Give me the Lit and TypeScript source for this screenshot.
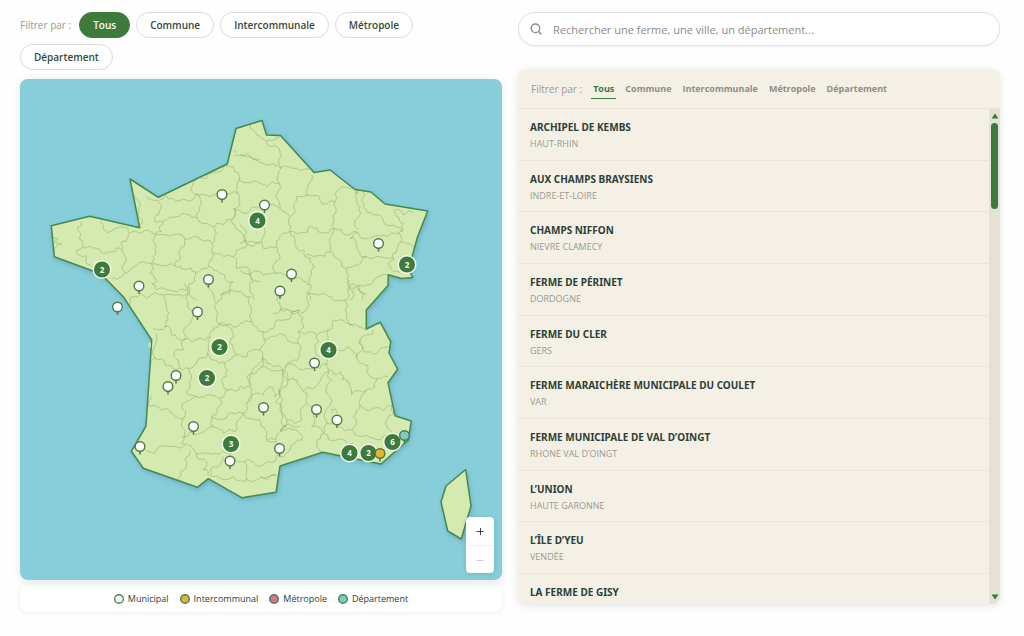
import { LitElement, html, svg, css, nothing } from "lit";
import { customElement, state } from "lit/decorators.js";

const KINDS = ["Tous", "Commune", "Intercommunale", "Métropole", "Département"];

const FARMS: [string, string][] = [
  ["ARCHIPEL DE KEMBS", "HAUT-RHIN"],
  ["AUX CHAMPS BRAYSIENS", "INDRE-ET-LOIRE"],
  ["CHAMPS NIFFON", "NIEVRE CLAMECY"],
  ["FERME DE PÉRINET", "DORDOGNE"],
  ["FERME DU CLER", "GERS"],
  ["FERME MARAICHÈRE MUNICIPALE DU COULET", "VAR"],
  ["FERME MUNICIPALE DE VAL D’OINGT", "RHONE VAL D’OINGT"],
  ["L’UNION", "HAUTE GARONNE"],
  ["L’ÎLE D’YEU", "VENDÉE"],
  ["LA FERME DE GISY", ""],
];

const LEGEND: [string, string][] = [
  ["Municipal", "municipal"],
  ["Intercommunal", "inter"],
  ["Métropole", "metro"],
  ["Département", "dept"],
];

const MAINLAND =
  "236,128.5 262,120.5 266.5,135 280.5,135.5 314,172.5 330,170 355,189.5 371,192 385,204 427.7,211 417.5,237 412,257 409,270 412.7,277.5 401.5,278.5 388.3,274.7 388,285.5 366.3,310 366.3,329 380.3,322.3 390.7,341.7 389,353 397.7,369.3 388,382.7 395,415.7 411.3,421 408.3,440 381,464 322.7,452.3 280,466 276,492.3 241.7,497.7 208.3,478.7 197.3,487.3 143.3,468.3 131.3,451.3 146,426 151.7,340 123.3,296.7 105,278 91.7,270.5 54.3,256.7 51.3,225.7 89.7,216.3 139.7,227.7 130,179 158.3,197.3 227.3,164";
const CORSICA = "465.7,469.5 446,486 441,502 447.7,531 461.3,539 471,506";

/* Department borders, grouped by quarter of the country; each quarter has its own origin at three units per map unit. */
const BORDERS: { x: number; y: number; lines: string[] }[] = [
  {
    x: 20,
    y: 100,
    lines: [
      "185,365 182,400 188,430 185,445 170,450 175,465 200,468 195,485 215,500",
      "188,443 230,445 250,460 275,455 290,445 305,450",
      "305,450 315,470 310,495 315,520 305,530 275,535",
      "305,450 303,430 320,418 328,400 325,385 310,378 290,385 262,400 250,385 240,365",
      "328,400 360,400 405,403",
      "342,285 360,310 355,340 362,375",
      "380,290 400,300 418,310 420,330 405,350 405,365 430,365 425,395 405,403",
      "418,300 460,295 500,300 530,282 540,320 530,340 532,355",
      "430,362 470,350 500,345 532,355 545,370 580,380 590,400 575,430 545,420 520,408 495,420",
      "405,403 430,403 470,402 490,408 495,420",
      "405,403 408,440 400,470 395,492 430,497 465,498",
      "495,420 480,450 482,475 465,498 495,508 525,515 550,505 565,500",
      "575,430 578,460 575,480 565,500",
      "395,492 380,490 350,495 330,510 315,520",
      "395,492 390,520 410,540 395,550 410,570 440,570 480,568 508,575 530,600",
      "525,515 515,550 508,575",
      "580,455 605,465 635,470 650,450 675,445",
      "580,380 590,370 620,360 640,355 645,330",
      "645,330 635,360 655,390 670,410 680,430 675,445",
      "512,270 520,250 560,235 600,215 625,200",
      "512,270 540,285 580,285 605,283 640,275 655,280",
      "625,195 645,215 655,245 655,280 660,310 640,325 645,330 690,330 710,320",
      "645,165 680,170 720,180",
      "655,240 690,248 720,250",
      "680,430 720,425",
      "640,470 650,505 690,510 700,540 720,545",
      "565,500 600,520 640,545 630,580 600,585",
      "98,410 112,415 105,425 125,432 110,440 102,455",
      "640,150 648,158",
    ],
  },
  {
    x: 240,
    y: 100,
    lines: [
      "30,75 50,105 80,125 100,120 120,108",
      "80,125 95,140 120,155 115,185 122,205",
      "0,165 40,175 70,190 100,190 122,205 170,205 220,210",
      "60,248 80,260 118,250",
      "122,205 118,250 115,300 120,325",
      "50,325 80,320 120,325 150,350 165,330 170,290",
      "215,225 203,255 205,285",
      "170,290 205,285 240,300 285,305",
      "150,350 155,380 150,395",
      "285,305 300,265 320,262 350,280 355,270",
      "285,305 288,340 280,365 282,385",
      "355,270 350,300 362,340 355,390",
      "355,270 375,285 370,320 400,345 430,365 470,380 485,395",
      "485,395 490,370 470,350 465,330 490,345 520,340",
      "150,395 180,398 215,378 245,398 282,385 320,405 355,400",
      "355,400 400,410 440,410 475,400 485,395",
      "150,395 165,430 190,450 195,470 230,468 272,455",
      "282,385 270,430 272,455 300,480 320,510",
      "355,400 330,415 350,440 360,465 380,470",
      "475,400 480,425 470,450 462,475",
      "480,425 500,430 520,450",
      "380,470 420,470 462,475 445,490 455,510 480,520",
      "380,470 365,480 345,495 325,500 320,510 325,545 328,560",
      "328,560 360,555 400,545 445,525",
      "328,560 340,580 330,600",
      "150,395 115,420 110,440 70,445 65,425",
      "65,340 70,380 65,425 30,425 0,430",
      "15,430 20,400 10,385 0,375",
      "110,440 120,470 105,490 110,520 70,525 60,515 0,510",
      "195,470 215,490 225,500 210,530 215,560 205,575 210,600",
      "110,520 150,540 185,535 210,555",
      "30,520 40,545 30,570 45,600",
      "355,555 370,580 365,600",
    ],
  },
  {
    x: 100,
    y: 280,
    lines: [
      "90,75 100,50 140,55 190,45 200,80 205,120 195,140 160,145",
      "190,45 230,45 255,45 265,40 255,10",
      "265,40 262,80 270,130 255,165 250,180 300,175 330,170",
      "195,140 215,165 250,180",
      "330,170 340,145 380,135 355,130 350,110 345,70",
      "320,10 340,40 350,70 365,55 410,35 450,50 455,90 455,125",
      "380,135 420,130 455,125 490,155 495,190 480,210",
      "380,135 400,165 390,190 410,225 440,230 480,210",
      "410,225 375,250 340,240 320,220 325,190 330,170",
      "250,180 250,210 225,215 235,240 240,265",
      "165,235 195,255 230,268 240,265 265,265 290,250 300,235 325,220",
      "375,250 380,290 365,300 385,330",
      "265,265 275,285 270,310 260,340 290,350 320,345 360,355 385,330",
      "385,330 420,320 450,320",
      "480,210 485,245 460,265 450,320",
      "290,350 260,365 255,410",
      "155,350 150,380 200,385 220,405 255,410 245,440 245,490 290,520",
      "360,355 350,390 335,410 340,440 300,460 245,470",
      "450,320 455,345 440,370 430,400 385,400 335,410",
      "430,400 410,440 405,455 370,460 340,440",
      "125,500 200,497 255,495",
      "270,510 255,540 250,570 235,600",
      "290,520 320,520 345,520 390,520 430,545 440,570 435,605",
      "290,520 320,545 310,570 330,590",
      "370,530 340,560 335,590 400,590 430,605 470,600 530,585",
      "430,545 490,555 525,545 530,530 530,485 500,480",
      "430,400 480,420 495,450 500,480 540,455 600,440",
      "440,370 490,345 510,320 525,350 540,330",
      "455,315 455,280 480,265 485,235 520,260 560,295 540,330",
      "490,155 520,145 530,120 600,90",
      "540,330 545,400 560,440 540,455",
      "155,250 165,235 170,160",
    ],
  },
  {
    x: 260,
    y: 280,
    lines: [
      "60,90 50,60 48,30",
      "145,65 140,85 105,95 60,90 40,100",
      "145,65 140,40 190,40 220,60 255,60",
      "270,0 265,40 255,60 260,100 270,135 320,150",
      "270,25 290,20 320,45",
      "60,90 90,95 130,115 130,135 115,155 150,155 170,165 205,150",
      "10,180 60,160 115,190",
      "205,150 220,120 260,130 280,140",
      "170,165 165,200 180,230",
      "115,155 115,190 120,230 100,240 75,265",
      "205,150 210,190",
      "235,210 260,200 290,235 300,250 325,265 330,290 360,295 385,290",
      "290,235 300,215 300,180 340,160 340,150",
      "300,180 310,215 350,220 385,200",
      "200,235 205,270 215,300 210,350 195,400",
      "75,265 130,270 180,265 205,250",
      "75,265 85,300 110,300 130,335 180,305 205,275",
      "0,260 70,270 70,300 55,330 60,390 80,420 125,420 140,370 130,335",
      "205,270 240,275 245,300 270,310 275,345 320,330 345,320 350,295",
      "320,330 305,345 300,375 340,385 395,375",
      "300,375 280,410 285,440 275,450 240,440 200,430 195,400",
      "215,400 215,388 228,388 230,400",
      "140,370 160,400 155,440 190,460 200,430",
      "190,460 170,490 185,515",
      "275,450 300,470 340,475 380,465",
      "395,375 380,420 390,450 430,460",
      "80,420 60,450 110,450 125,480 90,510 60,530",
      "0,590 50,585",
      "190,460 230,480 280,490",
    ],
  },
];

const CLUSTERS: [number, number, number][] = [
  [257.5, 220.5, 4], [102, 269.5, 2], [407, 264.5, 2], [219.5, 347, 2], [207, 378, 2],
  [328.5, 350, 4], [231, 444, 3], [349.5, 453, 4], [368.5, 453, 2], [392.5, 442, 6],
];

const PINS: [number, number, string][] = [
  [222, 194.5, "municipal"], [264.5, 205, "municipal"], [378.5, 243.5, "municipal"], [139, 286, "municipal"],
  [208.5, 279.5, "municipal"], [291.5, 274, "municipal"], [280, 291, "municipal"], [117.5, 307, "municipal"],
  [197.5, 312, "municipal"], [314.5, 363, "municipal"], [176, 375.5, "municipal"], [168, 386.5, "municipal"],
  [263.5, 407.5, "municipal"], [316.5, 409.5, "municipal"], [337, 420, "municipal"], [193.5, 426.5, "municipal"],
  [140, 446.5, "municipal"], [279.5, 448.5, "municipal"], [230, 461, "municipal"], [380, 453.5, "inter"], [404.5, 435.5, "dept"],
];

/* Turns a coarse polyline into an irregular one by pushing midpoints sideways. */
function roughen(points: string, seed: number): string {
  let pts = points.split(" ").map((p) => p.split(",").map(Number));
  let s = seed * 7919 + 13;
  const rnd = () => {
    s = (s * 1103515245 + 12345) % 2147483648;
    return s / 2147483648 - 0.5;
  };
  for (let pass = 0; pass < 2; pass++) {
    const out = [pts[0]];
    for (let i = 1; i < pts.length; i++) {
      const [ax, ay] = pts[i - 1];
      const [bx, by] = pts[i];
      const k = rnd() * 0.6;
      out.push([(ax + bx) / 2 - (by - ay) * k, (ay + by) / 2 + (bx - ax) * k], pts[i]);
    }
    pts = out;
  }
  return pts.map((p) => p.map((n) => n.toFixed(1)).join(",")).join(" ");
}

@customElement("farm-map")
class FarmMap extends LitElement {
  static styles = css`
    :host {
      display: block;
      position: relative;
      font-family: inherit;
    }
    .canvas {
      display: block;
      width: 100%;
      height: auto;
      border-radius: 8px;
      background: #87ceda;
      box-shadow: 0 2px 8px rgba(0, 0, 0, 0.1);
    }
    .land {
      fill: #d4eab0;
      stroke: #46884f;
      stroke-width: 1.5;
      stroke-linejoin: round;
      filter: drop-shadow(1px 2px 2px rgba(40, 90, 100, 0.25));
    }
    .border {
      fill: none;
      stroke: #85a561;
      stroke-width: 2;
      stroke-opacity: 0.7;
      stroke-linejoin: round;
    }
    .islet { fill: #c3dfb0; }
    .stem { stroke: #4d7a48; stroke-width: 1.5; }
    .pin { stroke: #4d7a48; stroke-width: 1.4; }
    .municipal { fill: #fff; }
    .inter { fill: #e9b52f; }
    .dept { fill: #7ccbc6; }
    .cluster { fill: #3c7b3c; stroke: #f2f7ea; stroke-width: 1.5; }
    .count { fill: #fff; font-size: 8px; font-weight: 700; text-anchor: middle; }
    .zoom {
      position: absolute;
      right: 8px;
      bottom: 7px;
      display: flex;
      flex-direction: column;
      width: 28px;
      padding: 0 2px;
      box-sizing: border-box;
      border-radius: 4px;
      background: #fff;
      box-shadow: 0 1px 4px rgba(0, 0, 0, 0.15);
    }
    .step {
      display: grid;
      place-items: center;
      height: 28px;
      padding: 0;
      border: 0;
      background: none;
      color: #444;
    }
    .step + .step { border-top: 1px solid #eee; }
    .step:disabled { color: #ccc; }
    .glyph { width: 8px; height: 8px; stroke: currentColor; stroke-width: 1; }
  `;

  render() {
    return html`
      <svg class="canvas" viewBox="20 79 482 501" role="img" aria-label="Carte des fermes">
        <clipPath id="shape"><polygon points=${MAINLAND}></polygon></clipPath>
        <polygon class="land" points=${MAINLAND}></polygon>
        <polygon class="land" points=${CORSICA}></polygon>
        <ellipse class="islet" cx="149.5" cy="345" rx="1.5" ry="3"></ellipse>
        <g clip-path="url(#shape)">
          ${BORDERS.map(
            (q, n) => svg`<g transform="translate(${q.x} ${q.y}) scale(0.3333)">
              ${q.lines.map((l, i) => svg`<polyline class="border" points=${roughen(l, n * 50 + i + 1)}></polyline>`)}
            </g>`
          )}
        </g>
        ${CLUSTERS.map(
          ([x, y, n]) => svg`<circle class="cluster" cx=${x} cy=${y} r="8.8"></circle>
            <text class="count" x=${x} y=${y + 3}>${n}</text>`
        )}
        ${PINS.map(
          ([x, y, kind]) => svg`<line class="stem" x1=${x} y1=${y + 4} x2=${x} y2=${y + 8}></line>
            <circle class="pin ${kind}" cx=${x} cy=${y} r="4.8"></circle>`
        )}
      </svg>
      <div class="zoom">
        <button class="step" aria-label="Zoom avant">
          <svg class="glyph" viewBox="0 0 8 8"><path d="M0.5 4.5H7.5M4.5 1V8"></path></svg>
        </button>
        <button class="step" aria-label="Zoom arrière" disabled>
          <svg class="glyph" viewBox="0 0 8 8"><path d="M0.5 4.5H7.5"></path></svg>
        </button>
      </div>
    `;
  }
}

@customElement("app-root")
class AppRoot extends LitElement {
  @state() private mapKind = "Tous";
  @state() private listKind = "Tous";

  static styles = css`
    :host {
      display: block;
      box-sizing: border-box;
      min-height: 100vh;
      padding: 12px 24px 24px 20px;
      background: #fefefe;
      color: #2c4038;
      font-family: "Open Sans", "Noto Sans", sans-serif;
      font-size: 10px;
    }
    button, input { font-family: inherit; }
    .page {
      display: grid;
      grid-template-columns: minmax(0, 1fr) minmax(0, 1fr);
      gap: 16px;
    }
    .left, .right { display: flex; flex-direction: column; }
    .filters {
      display: flex;
      flex-wrap: wrap;
      align-items: center;
      gap: 6px;
      margin-bottom: 9px;
    }
    .label { color: #999; margin-right: 2px; }
    .pill {
      height: 26px;
      padding: 0 13px;
      border: 1px solid #dcdcdc;
      border-radius: 13px;
      background: #fff;
      color: #33493f;
      font-size: 10px;
      font-weight: 600;
    }
    .pill.active { background: #3c7b3c; border-color: #3c7b3c; color: #fff; }
    .legend {
      display: flex;
      justify-content: center;
      gap: 11px;
      margin: 5px 0 0;
      padding: 6px;
      border-radius: 8px;
      background: #fff;
      box-shadow: 0 1px 6px rgba(0, 0, 0, 0.07);
      list-style: none;
      font-size: 9px;
      font-weight: 500;
      line-height: 15px;
    }
    .entry { display: flex; align-items: center; gap: 4px; }
    .dot { width: 10px; height: 10px; stroke: #47825a; stroke-width: 1.4; }
    .municipal { fill: #fff; }
    .inter { fill: #e2b233; }
    .metro { fill: #da7488; }
    .dept { fill: #7ccbc6; }

    .search {
      display: flex;
      align-items: center;
      gap: 11px;
      box-sizing: border-box;
      height: 34px;
      margin-bottom: 23px;
      padding: 0 11px;
      border: 1px solid #e0e0e0;
      border-radius: 17px;
      background: #fff;
      box-shadow: 0 1px 2px rgba(0, 0, 0, 0.06);
    }
    .lens { width: 12px; height: 12px; fill: none; stroke: #888; stroke-width: 1.3; stroke-linecap: round; }
    .field {
      flex: 1;
      min-width: 0;
      padding: 0;
      border: 0;
      outline: 0;
      background: none;
      color: #444;
      font-size: 11px;
    }
    .field::placeholder { color: #8a8a8a; opacity: 1; }
    .panel {
      display: flex;
      flex-direction: column;
      flex: 1;
      margin-bottom: 8px;
      border-radius: 8px;
      background: #f4f0e5;
      overflow: hidden;
      box-shadow: 0 2px 8px rgba(0, 0, 0, 0.1);
    }
    .tabs {
      display: flex;
      align-items: center;
      gap: 7px;
      box-sizing: border-box;
      height: 40px;
      padding: 0 13px;
      border-bottom: 1px solid #e9e5d9;
    }
    .tab {
      height: 20px;
      padding: 0 2px;
      border: 0;
      background: none;
      color: #8d8f83;
      font-size: 9px;
      font-weight: 700;
    }
    .tab.active { color: #3c7b3c; box-shadow: inset 0 -1px #3c7b3c; }
    .body { display: flex; flex: 1; contain: size; }
    .farms { flex: 1; margin: 0; padding: 0; overflow: hidden; list-style: none; }
    .farm {
      box-sizing: border-box;
      height: 52px;
      padding: 9px 12px 0;
      border-bottom: 1px solid #e9e5d9;
    }
    .farm:nth-child(3n + 2) { height: 51px; }
    .name { margin: 0; font-family: "Noto Sans", sans-serif; font-size: 10px; font-weight: 700; line-height: 18px; }
    .place { margin: 0; color: #9a9b90; font-size: 9px; line-height: 15px; }
    .track {
      display: flex;
      flex-direction: column;
      align-items: center;
      width: 11px;
      padding: 4px 0;
      box-sizing: border-box;
      background: #e5e2d5;
    }
    .arrow { width: 8px; height: 6px; fill: #3c7b3c; }
    .thumb { width: 7px; height: 86px; margin: 4px 0 auto; border-radius: 4px; background: #3c7b3c; }
  `;

  render() {
    return html`
      <main class="page">
        <section class="left">
          <div class="filters" role="group" aria-label="Filtrer la carte">
            <span class="label">Filtrer par :</span>
            ${KINDS.map(
              (k) => html`<button class="pill ${k === this.mapKind ? "active" : ""}" @click=${() => (this.mapKind = k)}>${k}</button>`
            )}
          </div>
          <farm-map></farm-map>
          <ul class="legend">
            ${LEGEND.map(
              ([name, kind]) => html`<li class="entry">
                <svg class="dot ${kind}" viewBox="0 0 10 10" aria-hidden="true"><circle cx="5" cy="5" r="4.3"></circle></svg>${name}
              </li>`
            )}
          </ul>
        </section>
        <section class="right">
          <label class="search">
            <svg class="lens" viewBox="0 0 12 12" aria-hidden="true">
              <circle cx="5.5" cy="5.3" r="4.3"></circle>
              <path d="M8.7 8.5L11 11"></path>
            </svg>
            <input class="field" type="search" aria-label="Rechercher" placeholder="Rechercher une ferme, une ville, un département..." />
          </label>
          <div class="panel">
            <div class="tabs" role="group" aria-label="Filtrer la liste">
              <span class="label">Filtrer par :</span>
              ${KINDS.map(
                (k) => html`<button class="tab ${k === this.listKind ? "active" : ""}" @click=${() => (this.listKind = k)}>${k}</button>`
              )}
            </div>
            <div class="body">
              <ul class="farms">
                ${FARMS.map(
                  ([name, place]) => html`<li class="farm"><h3 class="name">${name}</h3>${place ? html`<p class="place">${place}</p>` : nothing}</li>`
                )}
              </ul>
              <div class="track" aria-hidden="true">
                <svg class="arrow" viewBox="0 0 8 6"><path d="M4 0.5L7.5 5.5H0.5Z"></path></svg>
                <div class="thumb"></div>
                <svg class="arrow" viewBox="0 0 8 6"><path d="M4 5.5L7.5 0.5H0.5Z"></path></svg>
              </div>
            </div>
          </div>
        </section>
      </main>
    `;
  }
}
